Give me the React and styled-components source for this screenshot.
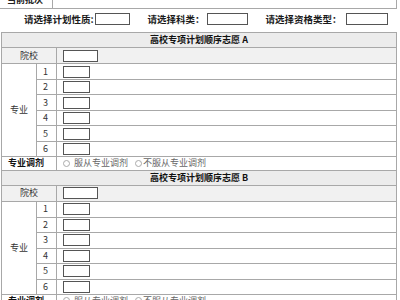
import React from "react";
import styled, { createGlobalStyle } from "styled-components";

const GlobalStyle = createGlobalStyle`
	body {
		margin: 0;
		background: #fff;
		color: #222;
		font-family: "Noto Sans CJK SC", "Noto Sans", sans-serif;
		font-size: 9px;
		overflow: hidden;
	}
`;

const Page = styled.div`
	width: 397px;
	margin-top: -10px;
`;

const BatchBar = styled.div`
	display: flex;
	height: 17px;
	border: 1px solid #a8a8a8;
	border-left: none;
`;

const BatchLabel = styled.div`
	width: 53px;
	padding-left: 7px;
	box-sizing: border-box;
	display: flex;
	align-items: center;
	font-weight: bold;
	border-right: 1px solid #a8a8a8;
`;

const FilterRow = styled.div`
	display: flex;
	align-items: center;
	height: 20px;
	padding-left: 24px;
`;

const FilterLabel = styled.span`
	font-weight: bold;
	font-size: 9.5px;
	color: #1a1a1a;
	margin-left: ${p => p.$gap || 0}px;
`;

const Box = styled.span`
	display: inline-block;
	box-sizing: border-box;
	width: ${p => p.$w}px;
	height: 12px;
	border: 1px solid #555;
	background: #fff;
	margin-left: ${p => p.$gap || 0}px;
`;

const Table = styled.table`
	border-collapse: collapse;
	width: 396px;
	margin: 3px 0 0 1px;
	table-layout: fixed;
	td {
		border: 1px solid #a8a8a8;
		padding: 0;
		line-height: 12px;
	}
`;

const Row = styled.tr`
	background: ${p => (p.$shade ? "#f1f1f1" : "transparent")};
	& > td {
		height: ${p => p.$h}px;
	}
`;

const HeadCell = styled.td`
	background: #ececec;
	text-align: center;
	font-weight: bold;
	color: #111;
`;

const LabelCell = styled.td`
	text-align: ${p => (p.$left ? "left" : "center")};
	padding-left: ${p => (p.$left ? "6px" : "0")} !important;
	font-weight: ${p => (p.$bold ? "bold" : "normal")};
	color: ${p => (p.$bold ? "#111" : "#333")};
`;

const SpanCell = styled.td`
	text-align: center;
	color: #333;
	${Row} > & {
		height: auto;
	}
`;

const NumCell = styled.td`
	padding-left: 6px !important;
	color: #333;
`;

const FieldCell = styled.td`
	padding-left: 6px !important;
	font-size: 0;
	& > span {
		vertical-align: middle;
	}
`;

const RadioGroup = styled.td`
	padding-left: 6px !important;
	color: #666;
`;

const Option = styled.label`
	display: inline-flex;
	align-items: center;
	margin-right: ${p => p.$gap || 0}px;
`;

const Circle = styled.span`
	width: 7px;
	height: 7px;
	box-sizing: border-box;
	border: 1px solid #aaa;
	border-radius: 50%;
	margin-right: ${p => p.$gap}px;
`;

const majorHeights = [15, 14, 15, 14, 15, 14];

const Block = ({ letter }) => (
	<>
		<Row $h={14}>
			<HeadCell colSpan={3}>高校专项计划顺序志愿 {letter}</HeadCell>
		</Row>
		<Row $h={15} $shade>
			<LabelCell colSpan={2}>院校</LabelCell>
			<FieldCell>
				<Box $w={35} />
			</FieldCell>
		</Row>
		{majorHeights.map((h, i) => (
			<Row key={i} $h={h}>
				{i === 0 && <SpanCell rowSpan={6}>专业</SpanCell>}
				<NumCell>{i + 1}</NumCell>
				<FieldCell>
					<Box $w={27} />
				</FieldCell>
			</Row>
		))}
		<Row $h={12}>
			<LabelCell colSpan={2} $left $bold>
				专业调剂
			</LabelCell>
			<RadioGroup>
				<Option $gap={7}>
					<Circle $gap={4} />
					服从专业调剂
				</Option>
				<Option>
					<Circle $gap={1} />
					不服从专业调剂
				</Option>
			</RadioGroup>
		</Row>
	</>
);

const App = () => (
	<Page>
		<GlobalStyle />
		<BatchBar>
			<BatchLabel>当前批次</BatchLabel>
		</BatchBar>
		<FilterRow>
			<FilterLabel>请选择计划性质:</FilterLabel>
			<Box $w={35} $gap={1} />
			<FilterLabel $gap={18}>请选择科类：</FilterLabel>
			<Box $w={41} $gap={2} />
			<FilterLabel $gap={18}>请选择资格类型：</FilterLabel>
			<Box $w={42} $gap={4} />
		</FilterRow>
		<Table>
			<colgroup>
				<col style={{ width: 35 }} />
				<col style={{ width: 20 }} />
				<col />
			</colgroup>
			<tbody>
				<Block letter="A" />
				<Block letter="B" />
			</tbody>
		</Table>
	</Page>
);

export default App;
